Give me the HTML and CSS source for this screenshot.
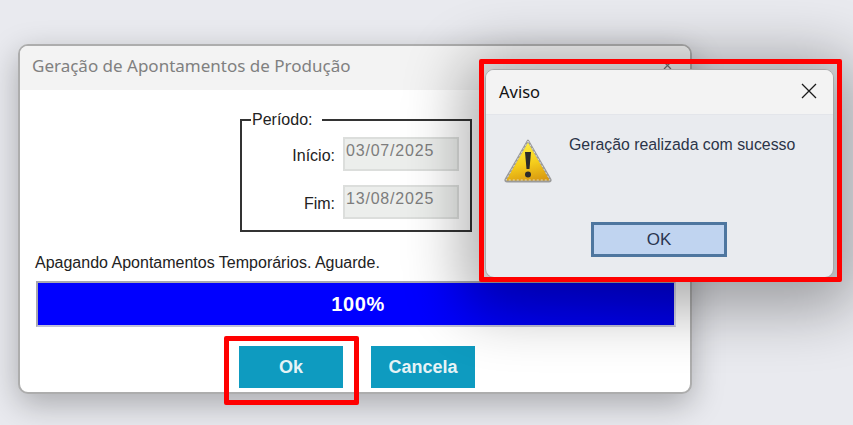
FILE: index.html
```html
<!DOCTYPE html>
<html lang="pt-BR">
<head>
    <meta charset="UTF-8">
    <title>Geração de Apontamentos de Produção</title>
    <link rel="stylesheet" href="styles.css">
</head>
<body>
    <div class="window main-window">
        <div class="titlebar">
            <span class="main-title">Geração de Apontamentos de Produção</span>
            <svg class="main-close" width="9" height="9" viewBox="0 0 9 9"><path d="M1 1l7 7M8 1l-7 7" stroke="#777" stroke-width="1.2" fill="none"/></svg>
        </div>
        <div class="main-body">
            <div class="period-row">
                <fieldset class="period">
                    <legend>Período:</legend>
                    <div class="date-row">
                        <label>Início:</label>
                        <div class="date-field">03/07/2025</div>
                    </div>
                    <div class="date-row">
                        <label>Fim:</label>
                        <div class="date-field">13/08/2025</div>
                    </div>
                </fieldset>
            </div>
            <div class="status">Apagando Apontamentos Temporários. Aguarde.</div>
            <div class="progress">100%</div>
            <div class="button-row">
                <button class="teal-btn">Ok</button>
                <button class="teal-btn">Cancela</button>
            </div>
        </div>
    </div>

    <div class="window alert-window">
        <div class="alert-titlebar">
            <span>Aviso</span>
            <svg width="16" height="16" viewBox="0 0 16 16"><path d="M1 1l14 14M15 1L1 15" stroke="#1a1a1a" stroke-width="1.3" fill="none"/></svg>
        </div>
        <div class="alert-body">
            <div class="alert-message">
                <svg class="warn-icon" width="50" height="46" viewBox="0 0 50 46">
                    <defs>
                        <linearGradient id="warnFill" x1="0.35" y1="0" x2="0.6" y2="1">
                            <stop offset="0" stop-color="#fff24a"/>
                            <stop offset="0.55" stop-color="#f6cf1c"/>
                            <stop offset="1" stop-color="#d99a10"/>
                        </linearGradient>
                    </defs>
                    <path d="M25 2.500L47.500 41.500Q48 43.500 46 43.500H4Q2 43.500 2.500 41.500Z" fill="url(#warnFill)" stroke="#9a9a9a" stroke-width="2" stroke-linejoin="round"/>
                    <path d="M25 3L47 42H3Z" fill="none" stroke="#e4e4e4" stroke-width="0.8" stroke-dasharray="2 2"/>
                    <path d="M22 14h6l-1.500 17h-3z" fill="#2b2b2b"/>
                    <circle cx="25" cy="36.500" r="3" fill="#2b2b2b"/>
                </svg>
                <p>Geração realizada com sucesso</p>
            </div>
            <button class="alert-ok">OK</button>
        </div>
    </div>

    <div class="red-box red-box-alert"></div>
    <div class="red-box red-box-ok"></div>
</body>
</html>
```

FILE: styles.css
```css
* {
    box-sizing: border-box;
}

body {
    margin: 0;
    width: 853px;
    height: 425px;
    overflow: hidden;
    position: relative;
    background: #e9eaef;
    font-family: 'Liberation Sans', Arial, sans-serif;
}

.window {
    position: absolute;
}

.main-window {
    left: 18px;
    top: 44px;
    width: 674px;
    height: 350px;
    background: #fff;
    border: 2px solid #adadad;
    border-radius: 10px;
    box-shadow: 0 10px 32px rgba(0, 0, 0, 0.28);
}

.titlebar {
    height: 44px;
    padding: 0 18px 6px 12px;
    display: flex;
    align-items: center;
    justify-content: space-between;
    background: #f3f3f3;
    border-radius: 8px 8px 0 0;
}

.main-title {
    font-family: 'Noto Sans', sans-serif;
    font-size: 17px;
    color: #808080;
}

.main-body {
    padding: 22px 15px 0 16px;
}

.period-row {
    display: flex;
    justify-content: flex-end;
    padding-right: 203px;
}

.period {
    width: 232px;
    height: 120px;
    margin: 0;
    padding: 9px 11px 0 0;
    border: 2px solid #333;
}

.period legend {
    margin-left: 9px;
    padding: 0 10px 0 1px;
    font-size: 16px;
    line-height: 16px;
    color: #222;
}

.date-row {
    display: flex;
    justify-content: flex-end;
    align-items: center;
    gap: 8px;
    height: 34px;
    margin-bottom: 14px;
}

.date-row label {
    font-size: 16px;
    color: #222;
    padding-top: 4px;
}

.date-field {
    width: 116px;
    height: 34px;
    padding: 3px 0 0 1px;
    background: #eceeec;
    border: 2px solid #dcdedc;
    font-size: 16px;
    letter-spacing: 0.8px;
    color: #7d7d7d;
}

.status {
    margin: 22px 0 0 -1px;
    font-size: 16px;
    line-height: 18px;
    color: #222;
}

.progress {
    margin-top: 9px;
    height: 46px;
    width: 640px;
    padding-left: 4px;
    display: flex;
    align-items: center;
    justify-content: center;
    background: linear-gradient(90deg, #0000ff 0%, #0000ff 60%, #0000e8 100%);
    border: 2px solid #a8a8b0;
    border-right-color: #d8d8e8;
    border-bottom-color: #c0c0d8;
    font-size: 20px;
    font-weight: bold;
    letter-spacing: 0.6px;
    color: #fff;
}

.button-row {
    margin-top: 19px;
    display: flex;
    gap: 28px;
    padding-left: 203px;
}

.teal-btn {
    width: 104px;
    height: 42px;
    padding: 0;
    border: 0;
    background: #0e9bc0;
    color: #e6f3f6;
    font-family: 'Liberation Sans', Arial, sans-serif;
    font-size: 18px;
    font-weight: bold;
}

.alert-window {
    left: 485px;
    top: 69px;
    width: 349px;
    height: 209px;
    background: #e9ebef;
    border: 1px solid #a8a8a8;
    border-radius: 9px;
    box-shadow: 0 10px 60px 22px rgba(0, 0, 0, 0.32);
}

.alert-titlebar {
    height: 45px;
    padding: 0 16px 2px 13px;
    display: flex;
    align-items: center;
    justify-content: space-between;
    background: #f3f3f3;
    border-bottom: 1px solid #e3e5ea;
    border-radius: 8px 8px 0 0;
    font-family: 'Noto Sans', sans-serif;
    font-size: 16.500px;
    color: #111;
}

.alert-body {
    padding: 23px 0 0 17px;
}

.alert-message {
    display: flex;
    align-items: flex-start;
    gap: 16px;
    height: 84px;
}

.alert-message p {
    margin: -2px 0 0;
    font-size: 15.850px;
    line-height: 18px;
    color: #2b3448;
}

.alert-ok {
    display: block;
    width: 136px;
    height: 35px;
    margin-left: 88px;
    padding: 0;
    background: #c0d4f0;
    border: 3px solid #4e769f;
    font-family: 'Liberation Sans', Arial, sans-serif;
    font-size: 17px;
    color: #2a3550;
}

.red-box {
    position: absolute;
    border: 5px solid #ff0000;
    border-radius: 2px;
}

.red-box-alert {
    left: 479px;
    top: 59px;
    width: 363px;
    height: 223px;
}

.red-box-ok {
    left: 224px;
    top: 336px;
    width: 135px;
    height: 69px;
}
```
